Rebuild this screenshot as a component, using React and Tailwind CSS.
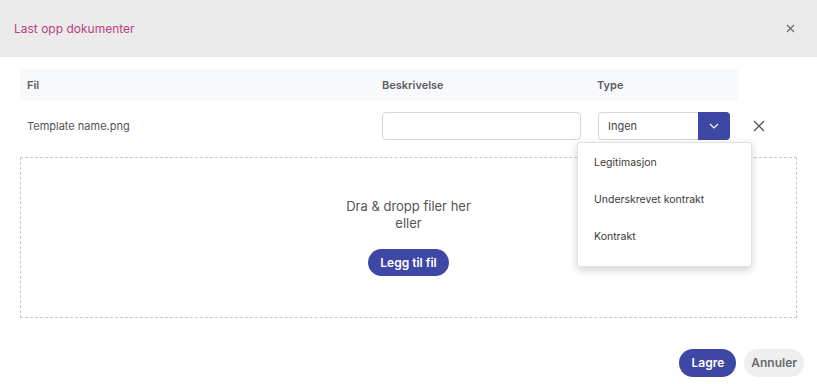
import React from 'react';

function App() {
  return (
    <div className="w-[817px] h-[384px] bg-white text-[#4a4a4a] font-['Inter',sans-serif] overflow-hidden">
      {/* Header */}
      <div className="h-[57px] bg-[#ebebeb] flex items-center justify-between pl-[14px] pr-[22px]">
        <h1 className="text-[12px] text-[#b8427d]">Last opp dokumenter</h1>
        <button className="text-[#6a6a6a]">
          <svg width="9" height="9" viewBox="0 0 9 9" fill="none" stroke="currentColor" strokeWidth="1.2">
            <path d="M1 1L8 8M8 1L1 8" />
          </svg>
        </button>
      </div>

      <div className="px-[20px] pt-[12px]">
        {/* Table */}
        <div className="flex h-[32px] w-[718px] items-center bg-[#f8f9fb] text-[11px] font-semibold text-[#5c5c5c]">
          <div className="w-[362px] pl-[7px]">Fil</div>
          <div className="w-[215px]">Beskrivelse</div>
          <div>Type</div>
        </div>
        <div className="relative flex h-[50px] items-center text-[11px] text-[#555]">
          <div className="w-[362px] pl-[7px]">Template name.png</div>
          <input className="w-[199px] h-[28px] rounded-[4px] border border-[#d6d6d6] outline-none" />
          <div className="ml-[17px] flex h-[28px]">
            <div className="w-[100px] h-[28px] flex items-center pl-[9px] rounded-l-[4px] border border-[#d6d6d6] border-r-0 text-[#444]">
              Ingen
            </div>
            <div className="w-[32px] h-[28px] flex items-center justify-center rounded-r-[4px] bg-[#3e47a3]">
              <svg width="10" height="6" viewBox="0 0 10 6" fill="none" stroke="white" strokeWidth="1.2">
                <path d="M1 1L5 5L9 1" />
              </svg>
            </div>
          </div>
          <div className="ml-[23px] text-[#555]">
            <svg width="12" height="12" viewBox="0 0 12 12" fill="none" stroke="currentColor" strokeWidth="1.3">
              <path d="M1 1L11 11M11 1L1 11" />
            </svg>
          </div>

          {/* Dropdown menu */}
          <div className="absolute left-[557px] top-[41px] z-10 w-[175px] h-[125px] rounded-[3px] bg-white border border-[#e2e2e2] shadow-[0_3px_8px_rgba(0,0,0,0.18)] pt-[1px] text-[10.5px] text-[#3a3a3a]">
            <div className="h-[37px] flex items-center pl-[16px]">Legitimasjon</div>
            <div className="h-[37px] flex items-center pl-[16px]">Underskrevet kontrakt</div>
            <div className="h-[37px] flex items-center pl-[16px]">Kontrakt</div>
          </div>
        </div>

        {/* Dropzone */}
        <div className="mt-[6px] w-[777px] h-[161px] border border-dashed border-[#c8c8c8] flex flex-col items-center pt-[40px]">
          <p className="text-[13px] text-[#555] leading-[17px] text-center">
            Dra &amp; dropp filer her
            <br />
            eller
          </p>
          <button className="mt-[17px] h-[27px] px-[12px] rounded-full bg-[#3e47a3] text-white text-[12px] font-semibold">
            Legg til fil
          </button>
        </div>
      </div>

      {/* Footer */}
      <div className="flex justify-end gap-[8px] pr-[13px] pt-[31px]">
        <button className="h-[28px] px-[12px] rounded-full bg-[#3e47a3] text-white text-[12px] font-semibold">Lagre</button>
        <button className="h-[28px] px-[7px] rounded-full bg-[#efefef] text-[#6b6b6b] text-[12px] font-semibold">Annuler</button>
      </div>
    </div>
  );
}

export default App;
